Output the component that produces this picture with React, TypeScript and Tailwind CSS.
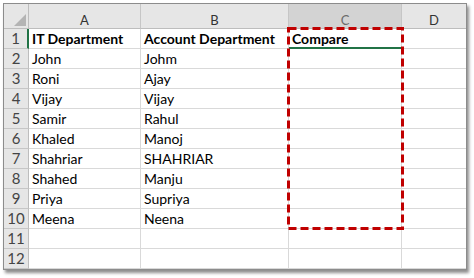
import React from "react";

const rows: [string, string, string][] = [
  ["IT Department", "Account Department", "Compare"],
  ["John", "Johm", ""],
  ["Roni", "Ajay", ""],
  ["Vijay", "Vijay", ""],
  ["Samir", "Rahul", ""],
  ["Khaled", "Manoj", ""],
  ["Shahriar", "SHAHRIAR", ""],
  ["Shahed", "Manju", ""],
  ["Priya", "Supriya", ""],
  ["Meena", "Neena", ""],
  ["", "", ""],
  ["", "", ""],
];

export default function App() {
  return (
    <div className="w-[474px] h-[278px] bg-white pt-[3px] pl-[3px]" style={{ fontFamily: "Lato, 'Open Sans', sans-serif" }}>
      <div className="relative w-[464px] border border-[#8c8c8c] shadow-[2px_3px_3px_rgba(0,0,0,0.45)] bg-white">
        <div className="grid grid-cols-[25px_112px_148px_113px_64px] grid-rows-[25px_repeat(12,20px)]">
          {/* header */}
          <div className="relative bg-[#e6e6e6] border-r border-b border-[#bdbdbd]">
            <svg className="absolute right-[2px] bottom-[2px]" width="12" height="12" viewBox="0 0 12 12">
              <polygon points="12,0 12,12 0,12" fill="#b4b4b4" />
            </svg>
          </div>
          <div className="bg-[#e6e6e6] border-r border-b border-[#c6c6c6] border-b-[#bdbdbd] flex items-center justify-center pt-[8px] leading-none text-[13px] text-[#333]">A</div>
          <div className="bg-[#e6e6e6] border-r border-b border-[#c6c6c6] border-b-[#bdbdbd] flex items-center justify-center pt-[8px] leading-none text-[13px] text-[#333]">B</div>
          <div className="bg-[#d3d3d3] border-r border-b border-[#c6c6c6] border-b-[#bdbdbd] flex items-center justify-center pt-[8px] leading-none text-[13px] text-[#6a6a6a]">C</div>
          <div className="bg-[#e6e6e6] border-b border-[#bdbdbd] flex items-center justify-center pt-[8px] leading-none text-[13px] text-[#333]">D</div>
          {rows.map((r, i) => (
            <React.Fragment key={i}>
              <div
                className={
                  "bg-[#e6e6e6] border-b border-[#c6c6c6] flex items-center justify-center text-[15px] text-[#444] " +
                  (i === 0 ? "border-r-2 border-r-[#217346] bg-[#dcdcdc]" : "border-r border-r-[#bdbdbd]")
                }
              >
                {i + 1}
              </div>
              <div className={"border-r border-b border-[#d9d9d9] flex items-center pl-[3px] text-[14px] text-black whitespace-nowrap overflow-hidden " + (i === 0 ? "font-bold" : "")}>
                {r[0]}
              </div>
              <div className={"border-r border-b border-[#d9d9d9] flex items-center pl-[3px] text-[14px] text-black whitespace-nowrap overflow-hidden " + (i === 0 ? "font-bold" : "")}>
                {r[1]}
              </div>
              <div
                className={
                  "border-r border-[#d9d9d9] flex items-center pl-[3px] text-[14px] text-black whitespace-nowrap overflow-hidden " +
                  (i === 0 ? "font-bold border-b-2 border-b-[#217346]" : "border-b")
                }
              >
                {r[2]}
              </div>
              <div className="border-b border-[#d9d9d9]" />
            </React.Fragment>
          ))}
        </div>
        <svg className="absolute left-[283px] top-[23px] pointer-events-none" width="117" height="203" viewBox="0 0 117 203">
          <rect x="1.5" y="1.5" width="114" height="200" fill="none" stroke="#c00000" strokeWidth="3" strokeDasharray="8 4" />
        </svg>
      </div>
    </div>
  );
}
